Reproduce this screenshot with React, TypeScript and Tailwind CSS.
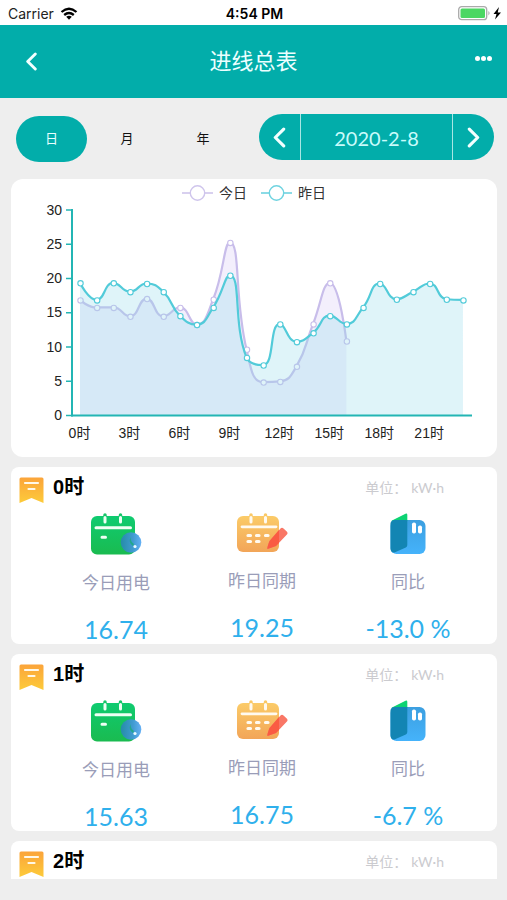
import React from 'react';

type Point = [number, number];

const TODAY = [16.8, 15.7, 15.7, 14.4, 17, 14.4, 15.7, 13.2, 16.9, 25.2, 9.6, 4.8, 4.9, 7.1, 13.3, 19.3, 10.8];
const YESTERDAY = [
  19.3, 16.8, 19.3, 18, 19.2, 18, 14.5, 13.2, 15.7, 20.4, 8.4, 7.3, 13.3, 10.7, 12, 14.5, 13.3, 15.7, 19.2, 16.9, 18,
  19.2, 16.9, 16.8,
];
const BASE = 236;
const toPoints = (values: number[]): Point[] => values.map((v, i) => [69 + i * 16.65, BASE - v * 6.85]);

const clamp = (v: number, a: number, b: number) => Math.max(Math.min(a, b), Math.min(v, Math.max(a, b)));

// Smooth curve whose control points never leave the box of their neighbours.
function smoothPath(points: Point[]): string {
  let d = `M${points[0][0]},${points[0][1]}`;
  let out: Point = points[0];
  for (let i = 1; i < points.length; i++) {
    const prev = points[i - 1];
    const p = points[i];
    const next = points[i + 1];
    let into: Point = p;
    let nextOut: Point = p;
    if (next) {
      const before = Math.hypot(p[0] - prev[0], p[1] - prev[1]);
      const after = Math.hypot(next[0] - p[0], next[1] - p[1]);
      const ratio = after / (before + after);
      const vx = next[0] - prev[0];
      const vy = next[1] - prev[1];
      nextOut = [clamp(p[0] + vx * 0.5 * ratio, next[0], p[0]), clamp(p[1] + vy * 0.5 * ratio, next[1], p[1])];
      const k = before / after;
      into = [
        clamp(p[0] - (nextOut[0] - p[0]) * k, prev[0], p[0]),
        clamp(p[1] - (nextOut[1] - p[1]) * k, prev[1], p[1]),
      ];
      nextOut = [p[0] + (p[0] - into[0]) / k, p[1] + (p[1] - into[1]) / k];
    }
    d += `C${out[0]},${out[1]} ${into[0]},${into[1]} ${p[0]},${p[1]}`;
    out = nextOut;
  }
  return d;
}

function Series({ values, line, fill }: { values: number[]; line: string; fill: string }) {
  const points = toPoints(values);
  const path = smoothPath(points);
  return (
    <g>
      <path d={`${path}V${BASE}H${points[0][0]}Z`} fill={fill} />
      <path d={path} fill="none" stroke={line} strokeWidth="2.2" />
      {points.map(([x, y]) => (
        <circle key={x} cx={x + 0.5} cy={y + 0.5} r="2.7" fill="#fff" stroke={line} strokeWidth="1.1" />
      ))}
    </g>
  );
}

function Legend({ color, label }: { color: string; label: string }) {
  return (
    <span className="flex items-center gap-1.5">
      <svg width="31" height="18" viewBox="0 0 31 18" fill="none" stroke={color} strokeWidth="1.4" aria-hidden="true">
        <path d="M0 9h31" strokeWidth="1.6" />
        <circle cx="15.5" cy="9" r="7.2" fill="#fff" />
      </svg>
      {label}
    </span>
  );
}

function Chart() {
  return (
    <section className="relative rounded-xl bg-white">
      <div className="absolute inset-x-0 top-1 flex justify-center gap-3.5 text-sm leading-5 text-[#333]">
        <Legend color="#cfc5ec" label="今日" />
        <Legend color="#6fd3e0" label="昨日" />
      </div>
      <svg viewBox="0 0 486 278" className="block w-full text-sm" role="img" aria-label="今日 昨日">
        <Series values={TODAY} line="#c8bdea" fill="rgba(200,180,240,0.22)" />
        <Series values={YESTERDAY} line="#52cbd9" fill="rgba(150,220,235,0.3)" />
        <path d="M61 30V237.500" stroke="#23b5b4" strokeWidth="2" />
        <path d="M60 236.500H461" stroke="#23b5b4" strokeWidth="2" />
        {[0, 5, 10, 15, 20, 25, 30].map((v) => (
          <g key={v}>
            <path d={`M55 ${BASE + 0.5 - v * 6.85}h5`} stroke="#23b5b4" strokeWidth="1.5" />
            <text x="51" y={BASE + 5 - v * 6.85} textAnchor="end" fill="#222">
              {v}
            </text>
          </g>
        ))}
        {[0, 3, 6, 9, 12, 15, 18, 21].map((h) => (
          <text key={h} x={68.5 + h * 16.65} y="259" textAnchor="middle" fill="#222">
            {h}时
          </text>
        ))}
      </svg>
    </section>
  );
}

function Ribbon() {
  return (
    <svg width="25" height="27" viewBox="0 0 25 27" aria-hidden="true">
      <defs>
        <linearGradient id="ribbon" x1="0" y1="0" x2="0" y2="1">
          <stop offset="0" stopColor="#fba43a" />
          <stop offset="1" stopColor="#fdcb3a" />
        </linearGradient>
      </defs>
      <path d="M2 1.500h21q1.500 0 1.500 1.500V27L12.500 22 0.500 27V3Q.5 1.500 2 1.500Z" fill="url(#ribbon)" />
      <path d="M6 7h13M9.500 13h6" stroke="#fff8e8" strokeWidth="2.200" strokeLinecap="round" />
    </svg>
  );
}

function TodayIcon() {
  return (
    <svg width="52" height="42" viewBox="0 0 52 42" aria-hidden="true">
      <defs>
        <linearGradient id="green" x1="0" y1="0" x2="0" y2="1">
          <stop offset="0" stopColor="#0fcb70" />
          <stop offset="1" stopColor="#1abb50" />
        </linearGradient>
        <linearGradient id="clock" x1="0" y1="0" x2="1" y2="0">
          <stop offset="0" stopColor="#258ca8" />
          <stop offset="0.6" stopColor="#409bd0" />
          <stop offset="1" stopColor="#65b0f5" />
        </linearGradient>
      </defs>
      <path d="M15 2v5M30.500 2v5" stroke="#16c568" strokeWidth="3.500" strokeLinecap="round" />
      <rect x="1" y="3" width="44" height="38.500" rx="6" fill="url(#green)" />
      <path d="M15 4.500v4.500M30.500 4.500v4.500" stroke="#effff4" strokeWidth="3" strokeLinecap="round" />
      <path d="M6 14.800h34.500M12 24.200h3.500" stroke="#effff4" strokeWidth="3" strokeLinecap="round" />
      <circle cx="41" cy="29.500" r="10.300" fill="url(#clock)" />
      <path d="M40.500 24q-2.500 6 2.500 9l1-2Q40.500 29 40.500 24Z" fill="#22a88c" />
      <circle cx="45" cy="33.500" r="1.600" fill="#e9fbff" />
    </svg>
  );
}

function YesterdayIcon() {
  return (
    <svg width="52" height="40" viewBox="0 0 52 40" aria-hidden="true">
      <defs>
        <linearGradient id="amber" x1="0" y1="0" x2="0" y2="1">
          <stop offset="0" stopColor="#fbcb68" />
          <stop offset="1" stopColor="#f2a558" />
        </linearGradient>
      </defs>
      <path d="M15 2v5M29.500 2v5" stroke="#fac866" strokeWidth="3.500" strokeLinecap="round" />
      <rect x="1" y="3" width="42" height="36" rx="6" fill="url(#amber)" />
      <path d="M15 4.500v4.500M29.500 4.500v4.500" stroke="#fffaf0" strokeWidth="3" strokeLinecap="round" />
      <path d="M6 13.800h34" stroke="#fffaf0" strokeWidth="2.800" strokeLinecap="round" />
      <path
        d="M12 22.500h2.500M20.500 22.500h2.500M29.500 22.500h2.500M12 28.500h2.500M20.500 28.500h2.500"
        stroke="#fffaf0"
        strokeWidth="3.200"
        strokeLinecap="round"
      />
      <path d="M44.500 15.500q1.500-1.300 3 0l3.500 3.300q1.200 1.500-.3 3L40 33l-8.500 3q-.7-1 2-8Z" fill="#f97766" />
      <path d="M43 17V30L40 33l-8.500 3q-.7-1 2-8Z" fill="#fa5b43" />
    </svg>
  );
}

function CompareIcon() {
  return (
    <svg width="36" height="41" viewBox="0 0 36 41" aria-hidden="true">
      <defs>
        <linearGradient id="sky" x1="0" y1="0" x2="0" y2="1">
          <stop offset="0" stopColor="#3c9fe0" />
          <stop offset="1" stopColor="#45b3fb" />
        </linearGradient>
      </defs>
      <rect x="0.500" y="7" width="35" height="34" rx="6" fill="url(#sky)" />
      <path d="M2 7.500 15.500.7q1.800-.8 1.800 1V8H1.500Z" fill="#0dd373" />
      <path d="M4 7h13.300v25q0 1.800-1.500 2.500L4.500 39.500Q1 40 .5 36V10.500Q.6 7.500 4 7Z" fill="#1385b3" />
      <rect x="22" y="9.500" width="4" height="11" rx="1.800" fill="#fff" />
      <rect x="28" y="12.500" width="4" height="8" rx="1.800" fill="#fff" />
    </svg>
  );
}

function Metric({ icon, label, value }: { icon: React.ReactNode; label: string; value: string }) {
  return (
    <div className="flex flex-1 flex-col items-center">
      {icon}
      <dt className="mt-[17px] text-[17px] leading-6 text-[#9a9db8]">{label}</dt>
      <dd className="mt-[15px] font-['Lato',sans-serif] text-[25px] leading-9 whitespace-pre text-[#2fb0ec]">{value}</dd>
    </div>
  );
}

function HourHeader({ hour }: { hour: number }) {
  return (
    <header className="flex h-[46px] items-start pl-2">
      <div className="pt-[9px]">
        <Ribbon />
      </div>
      <h2 className="ml-[9px] pt-1.5 text-[20px] leading-7 font-bold text-black">{hour}时</h2>
      <span className="mt-[11px] mr-[53px] ml-auto text-sm leading-5 text-[#cbcbcf]">
        单位： <span className="font-['Lato',sans-serif]">kW·h</span>
      </span>
    </header>
  );
}

function HourCard({ hour, today, yesterday, change }: { hour: number; today: string; yesterday: string; change: string }) {
  return (
    <article className="h-[177px] shrink-0 overflow-hidden rounded-lg bg-white">
      <HourHeader hour={hour} />
      <dl className="flex pr-4 pl-8">
        <Metric icon={<TodayIcon />} label="今日用电" value={today} />
        <Metric icon={<YesterdayIcon />} label="昨日同期" value={yesterday} />
        <Metric icon={<CompareIcon />} label="同比" value={change} />
      </dl>
    </article>
  );
}

function Arrow({ size, flip }: { size: number; flip?: boolean }) {
  return (
    <svg
      width={size}
      height={size}
      viewBox="0 0 20 20"
      fill="none"
      stroke="#f2ffff"
      strokeWidth="3"
      strokeLinecap="round"
      strokeLinejoin="round"
      aria-hidden="true"
    >
      <path d={flip ? 'M6 2 14 10 6 18' : 'M14 2 6 10 14 18'} />
    </svg>
  );
}

export default function App() {
  return (
    <div className="flex h-screen flex-col overflow-hidden bg-[#eeeeee] font-['Liberation_Sans','Noto_Sans_CJK_SC',sans-serif]">
      <div className="grid h-[25px] shrink-0 grid-cols-3 items-center bg-white pt-0.5 pr-1.5 pl-2 font-['Inter',sans-serif] text-sm text-[#222]">
        <span className="flex items-center gap-1.5">
          Carrier
          <svg width="18" height="13" viewBox="0 0 18 13" aria-hidden="true">
            <path d="M1.500 5Q9-1.500 16.500 5M4.200 8q4.800-4 9.600 0" fill="none" stroke="#000" strokeWidth="2.300" />
            <path d="M6.200 9.800Q9 7.600 11.800 9.800L9 12.800Z" />
          </svg>
        </span>
        <span className="text-center text-sm font-semibold text-black">4:54 PM</span>
        <span className="flex items-center justify-end">
          <svg width="43" height="15" viewBox="0 0 43 15" aria-hidden="true">
            <rect x=".7" y=".7" width="28" height="13" rx="3" fill="#fff" stroke="#aaa" strokeWidth="1.300" />
            <rect x="2.500" y="2.500" width="24.500" height="9.500" rx="1.500" fill="#4bd763" />
            <path d="M30.500 5q2 2 0 4.500Z" fill="#999" />
            <path d="M41 1 35.500 8h3L37 13.500 43 6.500h-3.300Z" fill="#000" />
          </svg>
        </span>
      </div>

      <header className="grid h-[73px] shrink-0 grid-cols-3 items-center bg-[#02adaa] px-[15px] text-white">
        <button type="button" aria-label="返回" className="flex size-8 items-center justify-center justify-self-start">
          <Arrow size={19} />
        </button>
        <h1 className="text-center text-[22px] leading-8 font-normal text-[#edffff]">进线总表</h1>
        <button type="button" aria-label="更多" className="flex h-8 items-center gap-px justify-self-end pb-1.5">
          <span className="size-[5px] rounded-full bg-white" />
          <span className="size-[5px] rounded-full bg-white" />
          <span className="size-[5px] rounded-full bg-white" />
        </button>
      </header>

      <div className="flex shrink-0 items-start pt-4 pr-[13px] pb-[17px] pl-4">
        <div className="flex flex-1 pt-0.5">
          <button type="button" className="h-[46px] w-[71px] rounded-full bg-[#02adaa] text-[13px] text-[#e8ffff]">
            日
          </button>
          <button type="button" className="ml-0.5 h-[46px] w-[76px] text-[13px] text-[#111]">
            月
          </button>
          <button type="button" className="h-[46px] w-[76px] text-[13px] text-[#111]">
            年
          </button>
        </div>
        <div className="flex h-[46px] w-[235px] overflow-hidden rounded-full bg-[#02adaa] text-[#c9fbfb]">
          <button type="button" aria-label="前一天" className="flex w-[41px] items-center justify-center">
            <Arrow size={21} />
          </button>
          <button type="button" className="flex-1 border-x border-[#a9e6e4] pt-0.5 font-['Lato',sans-serif] text-xl">
            2020-2-8
          </button>
          <button type="button" aria-label="后一天" className="flex w-[41px] items-center justify-center">
            <Arrow size={21} flip />
          </button>
        </div>
      </div>

      <main className="mb-[21px] flex min-h-0 flex-1 flex-col gap-2.5 overflow-hidden pr-2.5 pl-[11px]">
        <Chart />
        <HourCard hour={0} today="16.74" yesterday="19.25" change="-13.0 %" />
        <HourCard hour={1} today="15.63" yesterday="16.75" change="-6.7 %" />
        <article className="min-h-0 flex-1 overflow-hidden rounded-t-lg bg-white">
          <HourHeader hour={2} />
        </article>
      </main>
    </div>
  );
}
